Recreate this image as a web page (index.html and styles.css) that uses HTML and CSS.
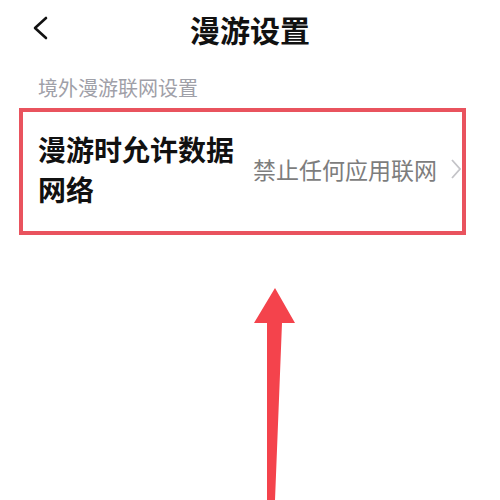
FILE: index.html
```html
<!DOCTYPE html>
<html lang="zh-CN">
  <head>
    <meta charset="utf-8">
    <title>漫游设置</title>
    <link rel="stylesheet" href="styles.css">
  </head>
  <body>
    <div class="page">
      <div class="top-bar">
        <svg class="back-icon" width="16" height="24" viewBox="0 0 16 24">
          <polyline points="13,2 2,12 13,22" fill="none" stroke="#111" stroke-width="2.6" stroke-linecap="round" stroke-linejoin="round"/>
        </svg>
        <h1 class="title">漫游设置</h1>
      </div>
      <div class="section-label">境外漫游联网设置</div>
      <div class="setting-row">
        <div class="setting-name">漫游时允许数据<br>网络</div>
        <div class="setting-value">禁止任何应用联网</div>
        <svg class="row-arrow" width="10" height="20" viewBox="0 0 10 20">
          <polyline points="1,1 9,10 1,19" fill="none" stroke="#c4c4c8" stroke-width="1.8"/>
        </svg>
      </div>
      <svg class="pointer" width="60" height="220" viewBox="0 0 60 220">
        <polygon points="25,0 45,35 32,35 25,212 17,212 17,35 4,35" fill="#f4434c"/>
      </svg>
    </div>
  </body>
</html>
```

FILE: styles.css
```css
* {
  box-sizing: border-box;
}
body {
  margin: 0;
  background: #fff;
  font-family: "Noto Sans CJK SC", "Noto Sans", sans-serif;
}
.page {
  position: relative;
  width: 500px;
  height: 500px;
  overflow: hidden;
}
.top-bar {
  position: relative;
  height: 58px;
  display: flex;
  align-items: center;
  justify-content: center;
}
.back-icon {
  position: absolute;
  left: 33px;
  top: 16px;
}
.title {
  margin: 0;
  font-size: 30px;
  font-weight: 700;
  color: #111;
  line-height: 58px;
}
.section-label {
  padding: 15px 0 0 38px;
  font-size: 20px;
  line-height: 30px;
  color: #9fa0a8;
  height: 50px;
}
.setting-row {
  margin-left: 19px;
  width: 447px;
  height: 127px;
  border: 4px solid #e9535e;
  display: flex;
  align-items: center;
  padding: 0 1px 6px 15px;
}
.setting-name {
  flex: 1;
  font-size: 28px;
  font-weight: 700;
  line-height: 40px;
  color: #111;
}
.setting-value {
  font-size: 23px;
  color: #7d7d7d;
  margin-right: 14px;
}
.row-arrow {
  display: block;
}
.pointer {
  position: absolute;
  left: 250px;
  top: 288px;
}
```
